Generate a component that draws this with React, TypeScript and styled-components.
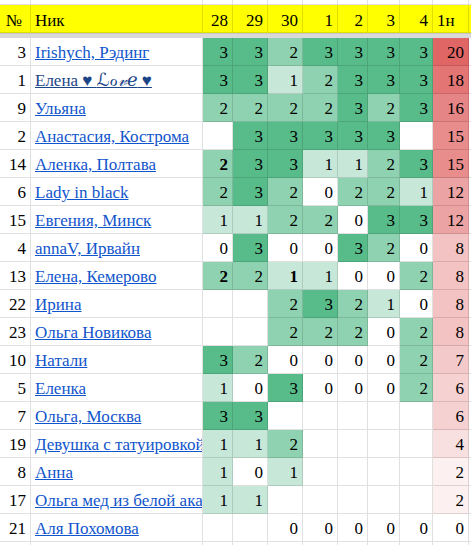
import styled, { createGlobalStyle } from 'styled-components';

const GlobalStyle = createGlobalStyle`
  html, body {
    margin: 0;
    padding: 0;
    background: #ffffff;
  }

  body {
    font-family: 'Liberation Serif', 'Times New Roman', serif;
    font-size: 17px;
    color: #000000;
    overflow: hidden;
  }
`;

const COLUMNS = '31px 172px 30px 35px 35px 35px 30px 32px 33px 36px 2px';
const DAYS = ['28', '29', '30', '1', '2', '3', '4'];

const Sheet = styled.div`
  width: 471px;
  height: 545px;
  overflow: hidden;
  display: flex;
  flex-direction: column;
`;

const Row = styled.div<{ $height?: number; $bg?: string }>`
  display: grid;
  grid-template-columns: ${COLUMNS};
  height: ${(p) => p.$height ?? 28}px;
  flex-shrink: 0;
  background: ${(p) => p.$bg ?? 'transparent'};
`;

const Cell = styled.div<{
  $bg?: string;
  $align?: 'left' | 'right';
  $bold?: boolean;
  $head?: boolean;
  $indent?: number;
}>`
  box-sizing: border-box;
  display: flex;
  align-items: flex-end;
  justify-content: ${(p) => (p.$align === 'left' ? 'flex-start' : 'flex-end')};
  padding: 0 ${(p) => (p.$align === 'left' ? '0' : '4px')} ${(p) => (p.$head ? '2px' : '3px')}
    ${(p) => (p.$align === 'left' ? `${p.$indent ?? 4}px` : '0')};
  border-right: 1px solid rgba(0, 0, 0, 0.12);
  border-bottom: 1px solid rgba(0, 0, 0, 0.12);
  background: ${(p) => p.$bg ?? 'transparent'};
  font-weight: ${(p) => (p.$bold ? 700 : 400)};
  line-height: 19px;
  white-space: nowrap;
  overflow: hidden;
`;

const Separator = styled.div`
  height: 5px;
  flex-shrink: 0;
  background: #d9d9d9;
  border-top: 1px solid #c6c6c6;
  box-sizing: border-box;
`;

const NameLink = styled.a<{ $dark?: boolean }>`
  color: ${(p) => (p.$dark ? '#1c4587' : '#1155cc')};
  text-decoration: underline;
  white-space: nowrap;
`;

const Script = styled.span`
  font-family: 'DejaVu Serif', 'DejaVu Sans', serif;
  font-style: italic;
  font-size: 18px;
`;

type Player = {
  n: number;
  name: string;
  days: (number | null)[];
  bold?: number[];
  total: number;
};

const players: Player[] = [
  { n: 3, name: 'Irishych, Рэдинг', days: [3, 3, 2, 3, 3, 3, 3], total: 20 },
  { n: 1, name: 'love', days: [3, 3, 1, 2, 3, 3, 3], total: 18 },
  { n: 9, name: 'Ульяна', days: [2, 2, 2, 2, 3, 2, 3], total: 16 },
  { n: 2, name: 'Анастасия, Кострома', days: [null, 3, 3, 3, 3, 3, null], total: 15 },
  { n: 14, name: 'Аленка, Полтава', days: [2, 3, 3, 1, 1, 2, 3], bold: [0], total: 15 },
  { n: 6, name: 'Lady in black', days: [2, 3, 2, 0, 2, 2, 1], total: 12 },
  { n: 15, name: 'Евгения, Минск', days: [1, 1, 2, 2, 0, 3, 3], total: 12 },
  { n: 4, name: 'annaV, Ирвайн', days: [0, 3, 0, 0, 3, 2, 0], total: 8 },
  { n: 13, name: 'Елена, Кемерово', days: [2, 2, 1, 1, 0, 0, 2], bold: [0, 2], total: 8 },
  { n: 22, name: 'Ирина', days: [null, null, 2, 3, 2, 1, 0], total: 8 },
  { n: 23, name: 'Ольга Новикова', days: [null, null, 2, 2, 2, 0, 2], total: 8 },
  { n: 10, name: 'Натали', days: [3, 2, 0, 0, 0, 0, 2], total: 7 },
  { n: 5, name: 'Еленка', days: [1, 0, 3, 0, 0, 0, 2], total: 6 },
  { n: 7, name: 'Ольга, Москва', days: [3, 3, null, null, null, null, null], total: 6 },
  { n: 19, name: 'Девушка с татуировкой', days: [1, 1, 2, null, null, null, null], total: 4 },
  { n: 8, name: 'Анна', days: [1, 0, 1, null, null, null, null], total: 2 },
  { n: 17, name: 'Ольга мед из белой акации', days: [1, 1, null, null, null, null, null], total: 2 },
  { n: 21, name: 'Аля Похомова', days: [null, null, 0, 0, 0, 0, 0], total: 0 },
];

// white -> colour, t in 0..1
const mix = (rgb: [number, number, number], t: number) => {
  const c = rgb.map((v) => Math.round(255 - (255 - v) * t));
  return `rgb(${c[0]}, ${c[1]}, ${c[2]})`;
};

const dayColor = (v: number | null) => (v === null ? undefined : mix([87, 187, 138], v / 3));
const totalColor = (v: number) => mix([224, 102, 102], v / 20);

const EmptyRow = ({ height }: { height: number }) => (
  <Row $height={height}>
    {Array.from({ length: 11 }).map((_, i) => (
      <Cell key={i} />
    ))}
  </Row>
);

const App = () => {
  return (
    <>
      <GlobalStyle />
      <Sheet>
        <EmptyRow height={5} />

        <Row $bg='#ffff00'>
          <Cell $align='left' $head $indent={6}>
            №
          </Cell>
          <Cell $align='left' $head>
            Ник
          </Cell>
          {DAYS.map((d) => (
            <Cell key={d} $head>
              {d}
            </Cell>
          ))}
          <Cell $align='left' $head>
            1н
          </Cell>
          <Cell $head />
        </Row>

        <Separator />

        {players.map((p) => (
          <Row key={p.n}>
            <Cell>{p.n}</Cell>
            <Cell $align='left'>
              {p.name === 'love' ? (
                <NameLink href='#' $dark>
                  Елена ♥ <Script>ℒℴ𝓋ℯ</Script> ♥
                </NameLink>
              ) : (
                <NameLink href='#'>{p.name}</NameLink>
              )}
            </Cell>
            {p.days.map((v, i) => (
              <Cell key={i} $bg={dayColor(v)} $bold={p.bold?.includes(i)}>
                {v ?? ''}
              </Cell>
            ))}
            <Cell $bg={totalColor(p.total)}>{p.total}</Cell>
            <Cell />
          </Row>
        ))}

        <EmptyRow height={28} />
      </Sheet>
    </>
  );
};

export default App;
